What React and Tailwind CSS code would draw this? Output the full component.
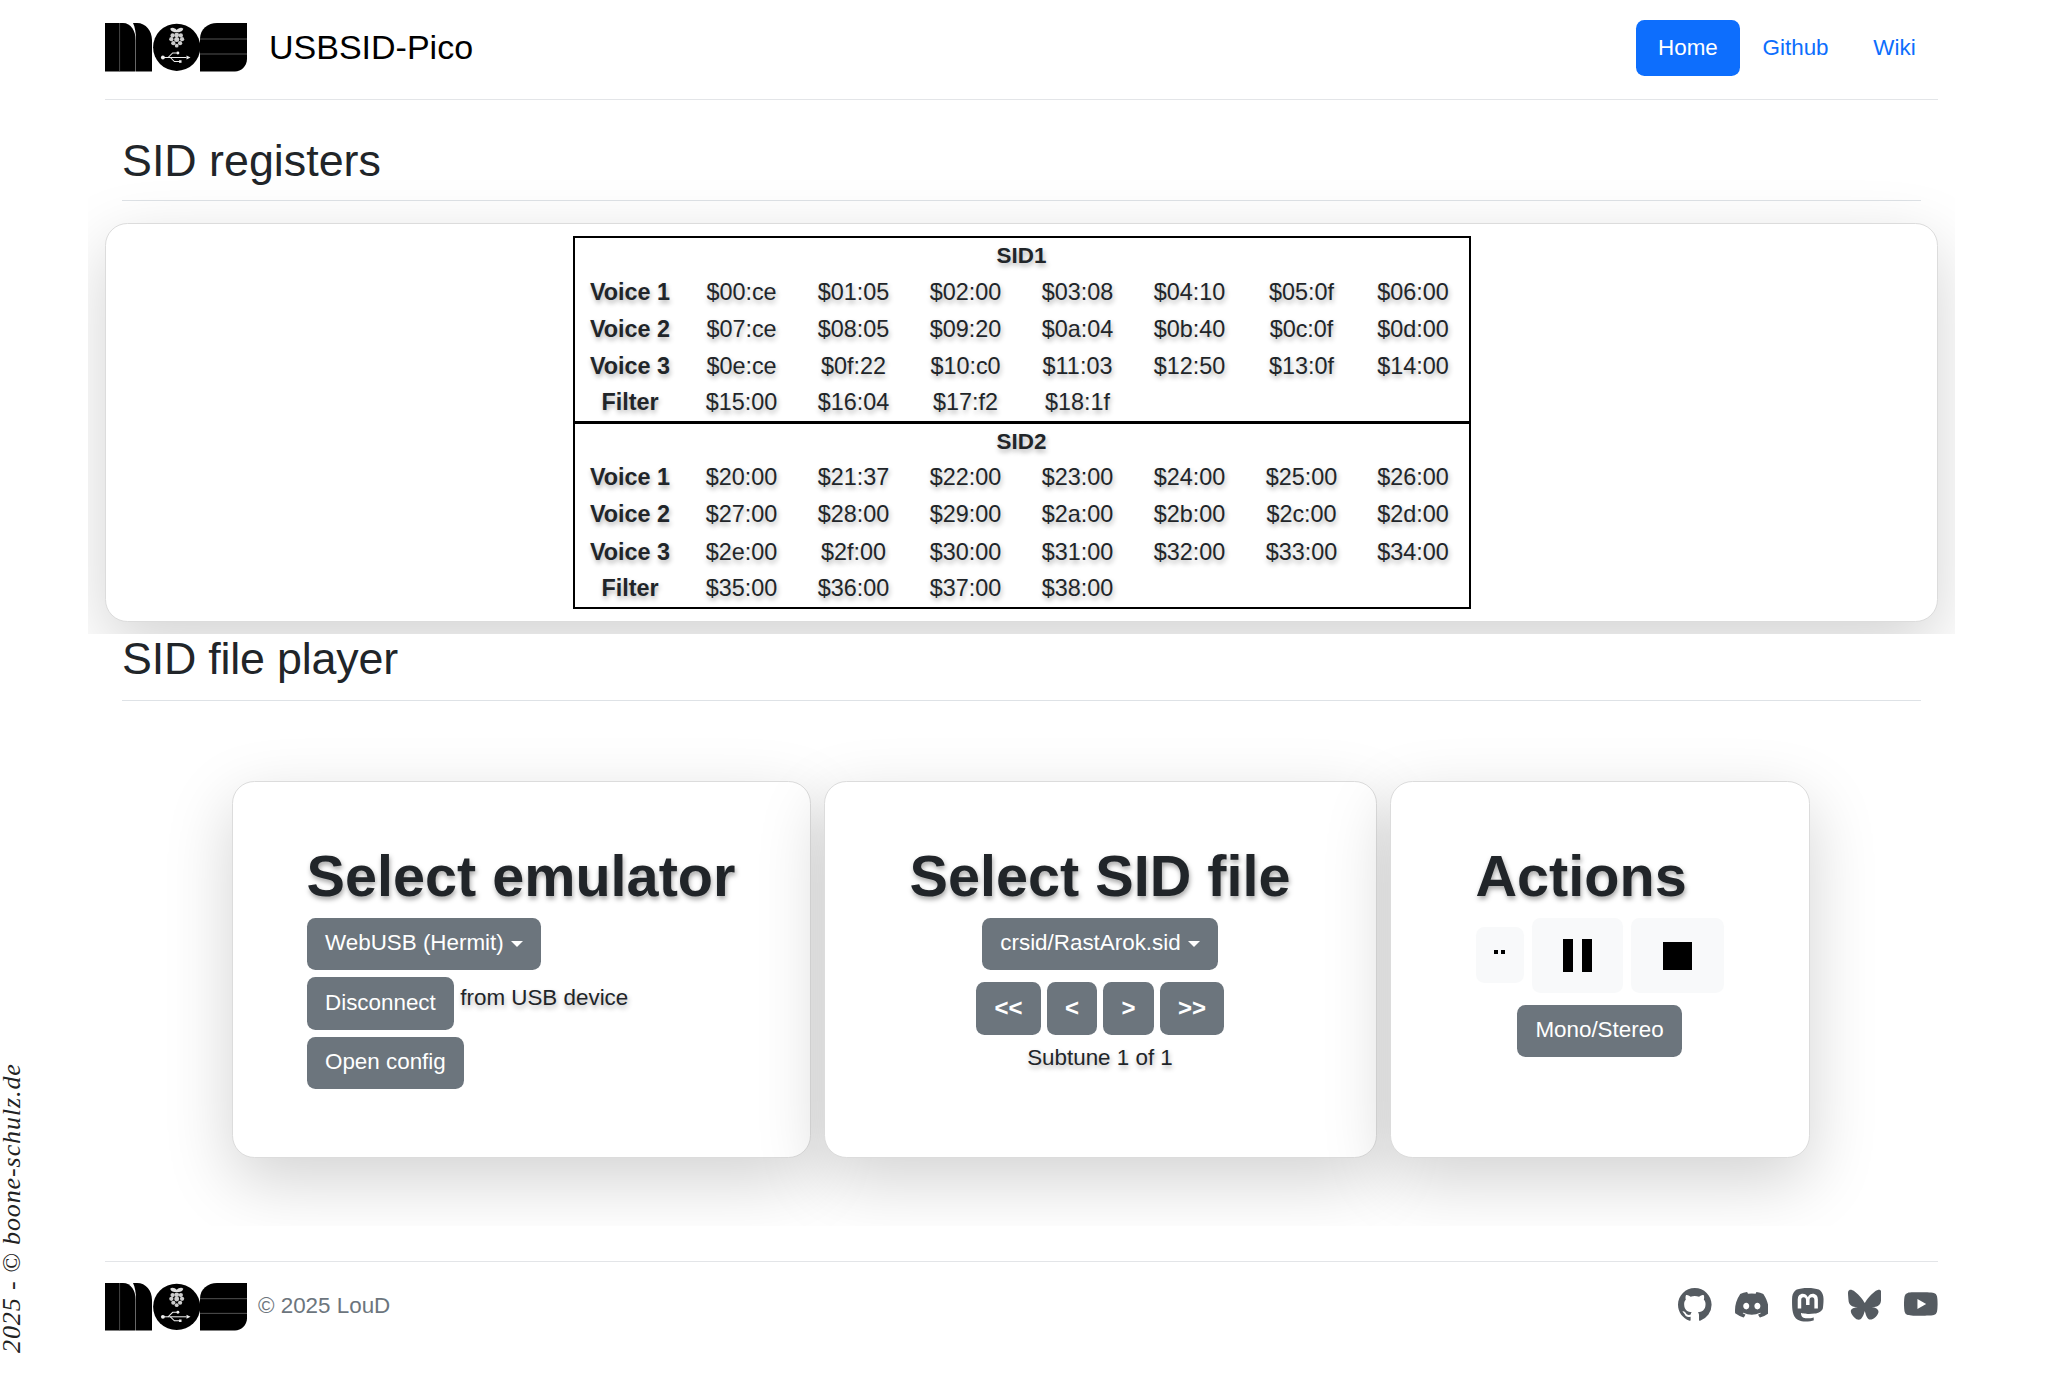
import React from 'react';
import { BsGithub, BsDiscord, BsMastodon, BsYoutube } from 'react-icons/bs';
import { FaBluesky } from 'react-icons/fa6';

const sid1 = [
  ['Voice 1', '$00:ce', '$01:05', '$02:00', '$03:08', '$04:10', '$05:0f', '$06:00'],
  ['Voice 2', '$07:ce', '$08:05', '$09:20', '$0a:04', '$0b:40', '$0c:0f', '$0d:00'],
  ['Voice 3', '$0e:ce', '$0f:22', '$10:c0', '$11:03', '$12:50', '$13:0f', '$14:00'],
  ['Filter', '$15:00', '$16:04', '$17:f2', '$18:1f'],
];
const sid2 = [
  ['Voice 1', '$20:00', '$21:37', '$22:00', '$23:00', '$24:00', '$25:00', '$26:00'],
  ['Voice 2', '$27:00', '$28:00', '$29:00', '$2a:00', '$2b:00', '$2c:00', '$2d:00'],
  ['Voice 3', '$2e:00', '$2f:00', '$30:00', '$31:00', '$32:00', '$33:00', '$34:00'],
  ['Filter', '$35:00', '$36:00', '$37:00', '$38:00'],
];

function Logo({ className }){
  return (
    <svg viewBox="0 0 142 49" preserveAspectRatio="none" className={className}>
      <path d="M0 0H18C26 0 30.6 8 30.6 17V48.5H0Z" fill="#000" />
      <path d="M28 0H32C41 0 47 8 47 17V48.5H31V17C31 10 30 4 28 0Z" fill="#000" />
      <line x1="14.6" y1="0" x2="14.6" y2="48.5" stroke="#666" strokeWidth="0.7" />
      <circle cx="71.7" cy="24.3" r="23.6" fill="#000" />
      <path d="M95 16C95 6 103 0 112 0H142V36C142 43 136 48.5 130 48.5H95Z" fill="#000" />
      <line x1="95" y1="16" x2="142" y2="16" stroke="#777" strokeWidth="0.7" />
      <line x1="95" y1="31" x2="142" y2="31" stroke="#777" strokeWidth="0.7" />
      {/* raspberry */}
      <g transform="translate(71.7 14.5) scale(1.25) translate(-71.7 -12.5)">
        <path d="M66.5 5.5C68 4 70.5 5 71.7 6.5C73 5 75.5 4 77 5.5C76.5 7.5 75 8 73.5 8.2H70C68.5 8 67 7.5 66.5 5.5Z" fill="#ddd" />
        <g fill="#ccc">
          <circle cx="71.7" cy="10.5" r="1.9" />
          <circle cx="68.4" cy="10.8" r="1.7" />
          <circle cx="75" cy="10.8" r="1.7" />
          <circle cx="67.4" cy="13.8" r="1.7" />
          <circle cx="76" cy="13.8" r="1.7" />
          <circle cx="71.7" cy="14" r="2" />
          <circle cx="69" cy="17" r="1.7" />
          <circle cx="74.4" cy="17" r="1.7" />
          <circle cx="71.7" cy="19" r="1.5" />
        </g>
      </g>
      {/* usb */}
      <g transform="translate(71.7 34.5) scale(1.15) translate(-72.5 -35.5)" fill="#eee" stroke="#eee">
        <circle cx="60.5" cy="35.5" r="1.7" stroke="none" />
        <line x1="61" y1="35.5" x2="81" y2="35.5" strokeWidth="0.9" />
        <path d="M81 33.7L84.5 35.5L81 37.3Z" stroke="none" />
        <path d="M65 35.5L69 31.5H72.5" fill="none" strokeWidth="0.9" />
        <path d="M67 35.5L70.5 39H74.5" fill="none" strokeWidth="0.9" />
        <circle cx="73.5" cy="31.5" r="1.3" stroke="none" />
        <rect x="74.5" y="37.9" width="2.2" height="2.2" stroke="none" />
      </g>
    </svg>
  );
}

function Btn({ className = '', children }){
  return (
    <button className={`h-[52.4px] rounded-[8.4px] bg-[#6c757d] px-[18.5px] pb-[2px] text-[22.4px] leading-[33.6px] text-white whitespace-nowrap ${className}`}>
      {children}
    </button>
  );
}

function Caret(){
  return <span className="ml-[7px] inline-block align-[3px] border-x-[6.7px] border-t-[6.7px] border-x-transparent border-t-white" />;
}

function SidRows({ title, rows }){
  return (
    <>
      <tr className="h-[36.6px]">
        <th colSpan={8} className="p-0 text-[22.4px] font-bold">{title}</th>
      </tr>
      {rows.map(r => (
        <tr key={r[0]} className="h-[36.6px]">
          {Array.from({ length: 8 }).map((_, i) => (
            i === 0
              ? <th key={i} className="p-0 font-bold">{r[0]}</th>
              : <td key={i} className="p-0 text-center">{r[i] || ''}</td>
          ))}
        </tr>
      ))}
    </>
  );
}

const sectionHead = 'mx-[17px] h-[67px] border-b-[1.4px] border-[#dee2e6] text-[44.8px] text-[#212529]';
const card = 'rounded-[22.4px] border-[1.4px] border-[#dcdcdc] bg-white h-[377px] shadow-[0_22.4px_67px_rgba(0,0,0,0.175)]';
const cardTitle = 'text-[57.6px] font-bold leading-[67px] whitespace-nowrap [text-shadow:1px_3px_5px_rgba(0,0,0,0.35)]';
const textShadow = '[text-shadow:1px_3px_5px_rgba(0,0,0,0.3)]';

export default function App(){
  return (
    <div className="relative h-[1373px] w-[2043px] overflow-hidden bg-white font-['Liberation_Sans',Arial,sans-serif] text-[22.4px] leading-[33.6px] text-[#212529]">
      {/* side credit */}
      <div className="absolute left-0 top-[1062px] h-[291px] w-[24px]">
        <span className="absolute bottom-0 left-[23px] origin-bottom-left -rotate-90 whitespace-nowrap font-['Liberation_Serif',serif] text-[26px] italic leading-[23px] tracking-[0.9px] text-[#222]">
          2025 - © boone-schulz.de
        </span>
      </div>

      <header className="mx-[105px] flex h-[100px] items-start justify-between border-b-[1.4px] border-[#e3e5e8]">
        <div className="flex items-center pt-[23px]">
          <Logo className="h-[49px] w-[142px]" />
          <span className="ml-[22px] text-[34px] leading-[49px] text-black">USBSID-Pico</span>
        </div>
        <nav className="flex pt-[20px]">
          <a className="h-[56px] rounded-[8.4px] bg-[#0d6efd] px-[22.4px] leading-[56px] text-white">Home</a>
          <a className="h-[56px] px-[22.4px] leading-[56px] text-[#0d6efd]">Github</a>
          <a className="h-[56px] px-[22.4px] leading-[56px] text-[#0d6efd]">Wiki</a>
        </nav>
      </header>

      <section className="mx-[88px] h-[534px] overflow-hidden px-[17px] pt-[34px]">
        <h2 className={`${sectionHead} leading-[52px]`}>SID registers</h2>
        <div className="mt-[22px] flex h-[399px] justify-center rounded-[22.4px] border-[1.4px] border-[#dcdcdc] bg-white pt-[12px] shadow-[0_22.4px_67px_rgba(0,0,0,0.175)]">
          <table className={`h-[373px] w-[898px] table-fixed border-collapse border-2 border-black text-[23.4px] ${textShadow}`}>
            <tbody className="border-b-[3px] border-black">
              <SidRows title="SID1" rows={sid1} />
            </tbody>
            <tbody>
              <SidRows title="SID2" rows={sid2} />
            </tbody>
          </table>
        </div>
      </section>

      <section className="mx-[88px] h-[592px] overflow-hidden px-[17px]">
        <h2 className={`${sectionHead} leading-[49px] tracking-[-0.2px]`}>SID file player</h2>
        <div className="mt-[80px] flex justify-center gap-[13px] pr-[2px]">
          <div className={`${card} w-[579px] pl-[74px] pt-[61px]`}>
            <h1 className={cardTitle}>Select emulator</h1>
            <div className="mt-[8px] flex flex-col items-start gap-[7px]">
              <Btn>WebUSB (Hermit)<Caret /></Btn>
              <div className="flex items-start">
                <Btn>Disconnect</Btn>
                <span className={`ml-[6px] mt-[4px] ${textShadow}`}>from USB device</span>
              </div>
              <Btn>Open config</Btn>
            </div>
          </div>

          <div className={`${card} flex w-[553px] flex-col items-center pt-[61px]`}>
            <h1 className={cardTitle}>Select SID file</h1>
            <div className="mt-[8px] flex flex-col items-center">
              <Btn>crsid/RastArok.sid<Caret /></Btn>
              <div className="mt-[12px] flex gap-[6px]">
                <Btn className="w-[65px] !px-0 text-[24px] font-bold">&lt;&lt;</Btn>
                <Btn className="w-[50px] !px-0 text-[24px] font-bold">&lt;</Btn>
                <Btn className="w-[51px] !px-0 text-[24px] font-bold">&gt;</Btn>
                <Btn className="w-[64px] !px-0 text-[24px] font-bold">&gt;&gt;</Btn>
              </div>
              <span className={`mt-[6px] ${textShadow}`}>Subtune 1 of 1</span>
            </div>
          </div>

          <div className={`${card} w-[420px] pl-[85px] pt-[61px]`}>
            <h1 className={cardTitle}>Actions</h1>
            <div className="mt-[8px] w-[248px]">
              <div className="flex items-start gap-[8px]">
                <div className="mt-[9px] flex h-[56px] w-[49px] justify-center gap-[3px] rounded-[8.4px] bg-[#f8f9fa] pt-[23px]">
                  <span className="h-[4px] w-[4px] bg-black" />
                  <span className="h-[4px] w-[4px] bg-black" />
                </div>
                <div className="flex h-[75px] w-[91px] items-center justify-center gap-[9px] rounded-[8.4px] bg-[#f8f9fa]">
                  <span className="h-[33px] w-[10px] bg-black" />
                  <span className="h-[33px] w-[10px] bg-black" />
                </div>
                <div className="flex h-[75px] w-[93px] items-center justify-center rounded-[8.4px] bg-[#f8f9fa]">
                  <span className="h-[28px] w-[29px] bg-black" />
                </div>
              </div>
              <div className="mt-[12px] flex justify-center">
                <Btn>Mono/Stereo</Btn>
              </div>
            </div>
          </div>
        </div>
      </section>

      <footer className="mx-[105px] mt-[35px] flex items-start justify-between border-t-[1.4px] border-[#e3e5e8]">
        <div className="flex items-center pt-[21px]">
          <Logo className="h-[48px] w-[142px]" />
          <span className="mb-[2px] ml-[11px] text-[#6c757d]">© 2025 LouD</span>
        </div>
        <div className="flex gap-[23px] pt-[26px] text-[33.6px] text-[#555b61]">
          <BsGithub />
          <BsDiscord />
          <BsMastodon />
          <FaBluesky />
          <BsYoutube />
        </div>
      </footer>
    </div>
  );
}
